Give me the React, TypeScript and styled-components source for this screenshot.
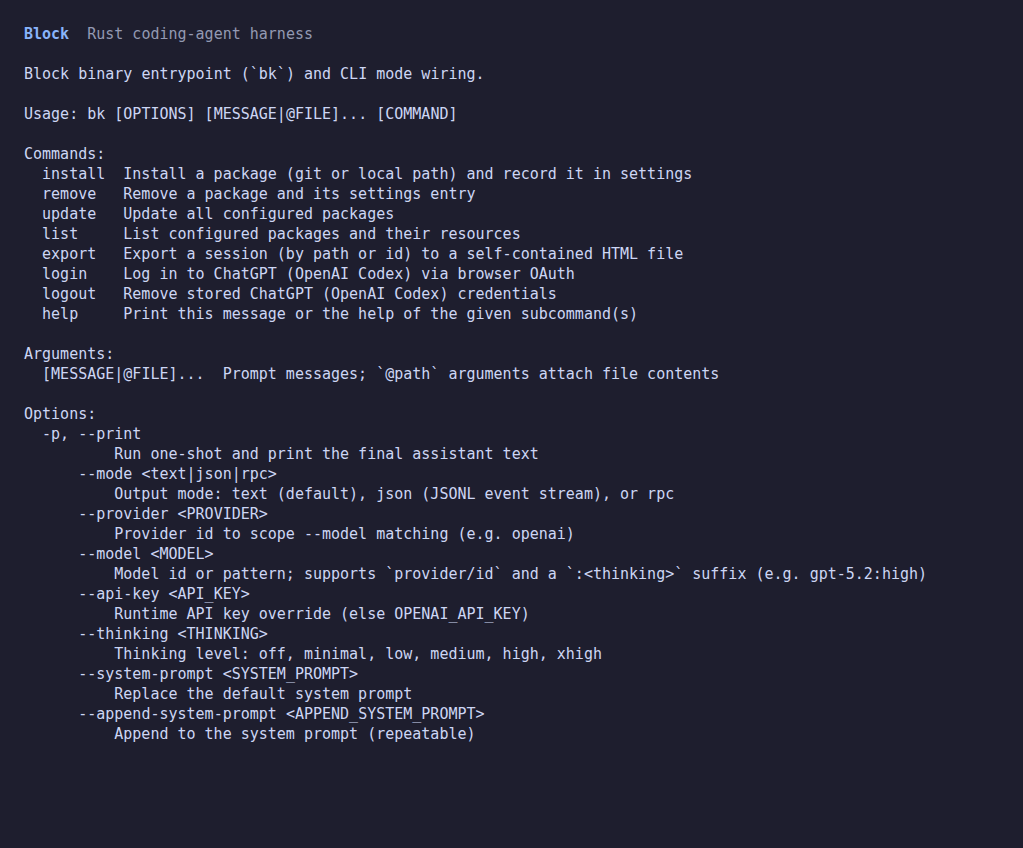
import React from "react";
import styled, { createGlobalStyle } from "styled-components";

const Global = createGlobalStyle`
  html, body { margin: 0; padding: 0; background: #1e1e2e; }
  body { min-height: 848px; }
`;

const Screen = styled.main`
  box-sizing: border-box;
  min-height: 848px;
  padding: 24px 24px;
  background: #1e1e2e;
  color: #cdd6f4;
  font-family: "DejaVu Sans Mono", "Liberation Mono", monospace;
  font-size: 15px;
  line-height: 20px;
  display: flex;
  flex-direction: column;
  gap: 20px;
  white-space: pre;
`;

const Header = styled.header`
  display: flex;
  gap: 2ch;
`;

const Brand = styled.span`
  color: #89b4fa;
  font-weight: 600;
`;

const Tagline = styled.span`
  color: #9399b2;
`;

const Line = styled.div``;

const Section = styled.section`
  display: flex;
  flex-direction: column;
`;

const SectionTitle = styled.div``;

const Table = styled.div<{ $key: number }>`
  display: grid;
  grid-template-columns: ${(p) => p.$key}ch auto;
  padding-left: 2ch;
`;

const Cell = styled.span``;

const Option = styled.div<{ $indent: number }>`
  display: flex;
  flex-direction: column;
  padding-left: ${(p) => p.$indent}ch;
`;

const OptionDesc = styled.div<{ $indent: number }>`
  padding-left: ${(p) => p.$indent}ch;
`;

const commands: [string, string][] = [
  ["install", "Install a package (git or local path) and record it in settings"],
  ["remove", "Remove a package and its settings entry"],
  ["update", "Update all configured packages"],
  ["list", "List configured packages and their resources"],
  ["export", "Export a session (by path or id) to a self-contained HTML file"],
  ["login", "Log in to ChatGPT (OpenAI Codex) via browser OAuth"],
  ["logout", "Remove stored ChatGPT (OpenAI Codex) credentials"],
  ["help", "Print this message or the help of the given subcommand(s)"],
];

const options: [string, string, boolean][] = [
  ["-p, --print", "Run one-shot and print the final assistant text", true],
  ["--mode <text|json|rpc>", "Output mode: text (default), json (JSONL event stream), or rpc", false],
  ["--provider <PROVIDER>", "Provider id to scope --model matching (e.g. openai)", false],
  ["--model <MODEL>", "Model id or pattern; supports `provider/id` and a `:<thinking>` suffix (e.g. gpt-5.2:high)", false],
  ["--api-key <API_KEY>", "Runtime API key override (else OPENAI_API_KEY)", false],
  ["--thinking <THINKING>", "Thinking level: off, minimal, low, medium, high, xhigh", false],
  ["--system-prompt <SYSTEM_PROMPT>", "Replace the default system prompt", false],
  ["--append-system-prompt <APPEND_SYSTEM_PROMPT>", "Append to the system prompt (repeatable)", false],
];

export default function App() {
  return (
    <>
      <Global />
      <Screen>
        <Header>
          <Brand>Block</Brand>
          <Tagline>Rust coding-agent harness</Tagline>
        </Header>
        <Line>Block binary entrypoint (`bk`) and CLI mode wiring.</Line>
        <Line>Usage: bk [OPTIONS] [MESSAGE|@FILE]... [COMMAND]</Line>
        <Section>
          <SectionTitle>Commands:</SectionTitle>
          <Table $key={9}>
            {commands.map(([k, v]) => (
              <React.Fragment key={k}>
                <Cell>{k}</Cell>
                <Cell>{v}</Cell>
              </React.Fragment>
            ))}
          </Table>
        </Section>
        <Section>
          <SectionTitle>Arguments:</SectionTitle>
          <Table $key={20}>
            <Cell>[MESSAGE|@FILE]...</Cell>
            <Cell>Prompt messages; `@path` arguments attach file contents</Cell>
          </Table>
        </Section>
        <Section>
          <SectionTitle>Options:</SectionTitle>
          {options.map(([flag, desc, short]) => (
            <Option key={flag} $indent={short ? 2 : 6}>
              <Cell>{flag}</Cell>
              <OptionDesc $indent={short ? 8 : 4}>{desc}</OptionDesc>
            </Option>
          ))}
        </Section>
      </Screen>
    </>
  );
}
